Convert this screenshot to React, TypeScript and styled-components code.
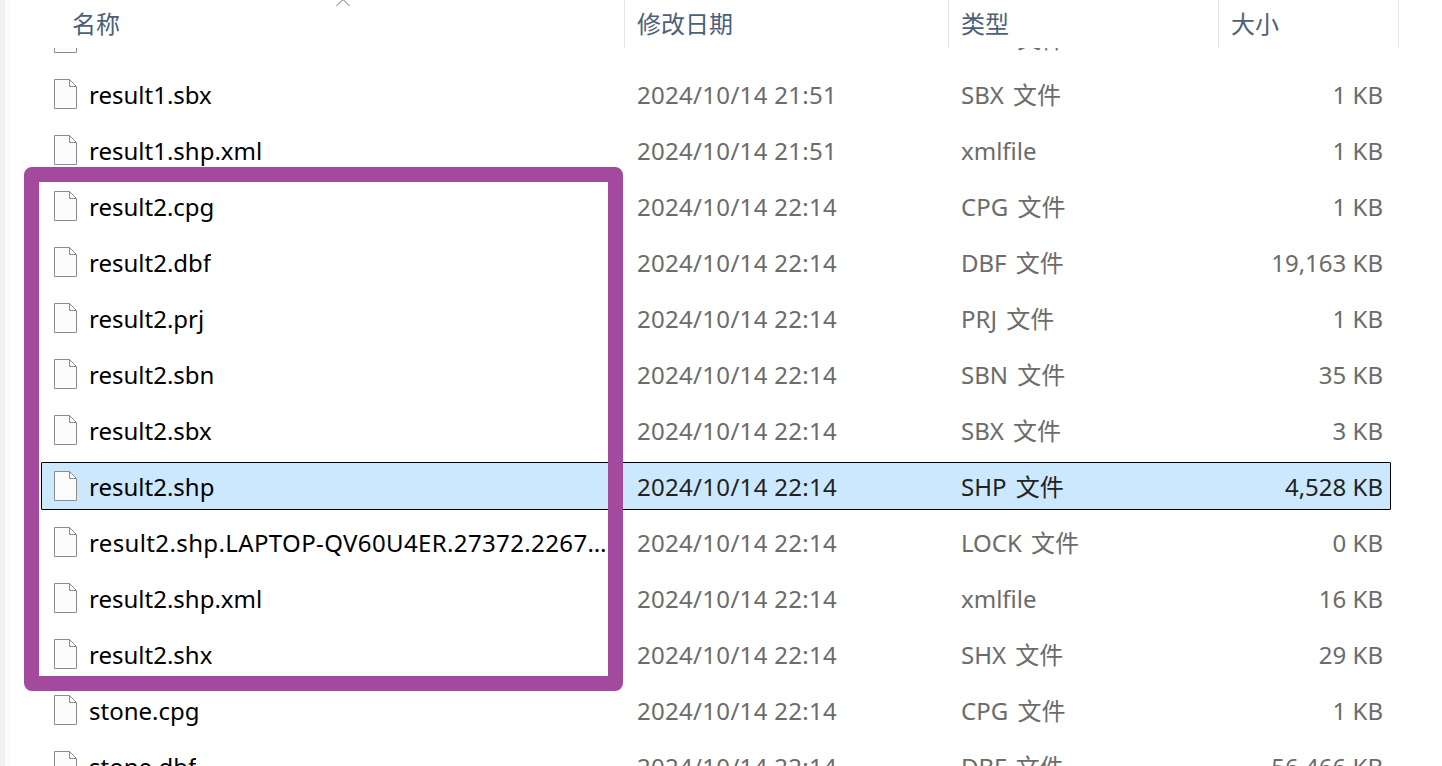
import { createGlobalStyle } from "styled-components";
import styled from "styled-components";

const GlobalStyle = createGlobalStyle`
  html, body {
    margin: 0;
    padding: 0;
    background: #fff;
  }
`;

type FileRow = {
  name: string;
  date: string;
  kind: string;
  size: string;
  selected?: boolean;
  long?: boolean;
};

const NEW_DATE = "2024/10/14 22:14";
const OLD_DATE = "2024/10/14 21:51";

const files: FileRow[] = [
  { name: "result1.sbn", date: OLD_DATE, kind: "SBN 文件", size: "1 KB" },
  { name: "result1.sbx", date: OLD_DATE, kind: "SBX 文件", size: "1 KB" },
  { name: "result1.shp.xml", date: OLD_DATE, kind: "xmlfile", size: "1 KB" },
  { name: "result2.cpg", date: NEW_DATE, kind: "CPG 文件", size: "1 KB" },
  { name: "result2.dbf", date: NEW_DATE, kind: "DBF 文件", size: "19,163 KB" },
  { name: "result2.prj", date: NEW_DATE, kind: "PRJ 文件", size: "1 KB" },
  { name: "result2.sbn", date: NEW_DATE, kind: "SBN 文件", size: "35 KB" },
  { name: "result2.sbx", date: NEW_DATE, kind: "SBX 文件", size: "3 KB" },
  { name: "result2.shp", date: NEW_DATE, kind: "SHP 文件", size: "4,528 KB", selected: true },
  { name: "result2.shp.LAPTOP-QV60U4ER.27372.22672.sr.lock", date: NEW_DATE, kind: "LOCK 文件", size: "0 KB", long: true },
  { name: "result2.shp.xml", date: NEW_DATE, kind: "xmlfile", size: "16 KB" },
  { name: "result2.shx", date: NEW_DATE, kind: "SHX 文件", size: "29 KB" },
  { name: "stone.cpg", date: NEW_DATE, kind: "CPG 文件", size: "1 KB" },
  { name: "stone.dbf", date: NEW_DATE, kind: "DBF 文件", size: "56,466 KB" },
];

const FileIcon = () => (
  <IconSvg viewBox="0 0 23 30" width="23" height="30">
    <path
      d="M0.5 0.5H15.5L22.5 7.5V29.5H0.5Z"
      fill="#fbfbfb"
      stroke="#8c8c8c"
      strokeWidth="1"
    />
    <path d="M15.5 0.5V7.5H22.5" fill="none" stroke="#8c8c8c" strokeWidth="1" />
  </IconSvg>
);

const App = () => {
  return (
    <Page>
      <GlobalStyle />
      <Gutter />
      <Explorer>
        <Header>
          <HeaderCell>名称</HeaderCell>
          <HeaderCell>修改日期</HeaderCell>
          <HeaderCell>类型</HeaderCell>
          <HeaderCell>大小</HeaderCell>
        </Header>
        <SortChevron viewBox="0 0 16 6" width="16" height="6">
          <path d="M1.5 6L8 -0.5L14.5 6" fill="none" stroke="#6b6b6b" strokeWidth="1" />
        </SortChevron>
        <List>
          {files.map((file) => (
            <Row key={file.name} $selected={file.selected}>
              <NameCell>
                <FileIcon />
                <FileName $long={file.long}>{file.name}</FileName>
              </NameCell>
              <DateCell $selected={file.selected}>{file.date}</DateCell>
              <KindCell $selected={file.selected}>{file.kind}</KindCell>
              <SizeCell $selected={file.selected}>{file.size}</SizeCell>
            </Row>
          ))}
        </List>
        <Highlight />
      </Explorer>
    </Page>
  );
};

const Page = styled.div`
  display: flex;
  width: 1442px;
  height: 766px;
  overflow: hidden;
  background: #fff;
  font-family: "Noto Sans", "Noto Sans CJK SC", sans-serif;
`;

const Gutter = styled.div`
  flex: none;
  width: 5px;
  background: #f0f0f0;
  border-right: 5px solid #fbfbfb;
`;

const Explorer = styled.div`
  position: relative;
  flex: 1;
  display: flex;
  flex-direction: column;
  min-width: 0;
`;

const Header = styled.div`
  flex: none;
  display: grid;
  grid-template-columns: 615px 324px 270px 180px;
  height: 48px;
`;

const HeaderCell = styled.div`
  display: flex;
  align-items: center;
  padding-left: 12px;
  padding-bottom: 3px;
  border-right: 1px solid #e5e5e5;
  box-sizing: border-box;
  color: #4c607a;
  font-size: 24px;

  &:first-child {
    padding-left: 62px;
  }
`;

const SortChevron = styled.svg`
  position: absolute;
  top: 0;
  left: 325px;
`;

const List = styled.div`
  flex: 1;
  min-height: 0;
  overflow: hidden;
  display: flex;
  flex-direction: column;
  gap: 8px;
  padding-left: 31px;

  & > :first-child {
    margin-top: -34px;
  }
`;

const Row = styled.div<{ $selected?: boolean }>`
  flex: none;
  display: grid;
  grid-template-columns: 583px 324px 270px 173px;
  align-items: center;
  box-sizing: border-box;
  width: 1350px;
  height: 48px;
  border: 1px solid ${(p) => (p.$selected ? "#000" : "transparent")};
  border-radius: 1px;
  background: ${(p) => (p.$selected ? "#cce8ff" : "transparent")};
`;

const NameCell = styled.div`
  display: flex;
  align-items: center;
  gap: 12px;
  min-width: 0;
  padding-left: 12px;
  padding-right: 17px;
`;

const IconSvg = styled.svg`
  flex: none;
`;

const FileName = styled.span<{ $long?: boolean }>`
  min-width: 0;
  overflow: hidden;
  white-space: nowrap;
  text-overflow: ellipsis;
  color: #000;
  font-size: 24px;
  letter-spacing: ${(p) => (p.$long ? "0.37px" : "0")};
`;

const DetailCell = styled.div<{ $selected?: boolean }>`
  padding-top: 2px;
  padding-left: 12px;
  color: ${(p) => (p.$selected ? "#222" : "#6b6b6b")};
  font-size: 24px;
  line-height: 32px;
  white-space: nowrap;
`;

const DateCell = styled(DetailCell)`
  letter-spacing: 0.3px;
`;

const KindCell = styled(DetailCell)`
  word-spacing: 3px;
`;

const SizeCell = styled(DetailCell)`
  padding-left: 0;
  padding-right: 9px;
  text-align: right;
`;

const Highlight = styled.div`
  position: absolute;
  top: 167px;
  left: 14px;
  box-sizing: border-box;
  width: 599px;
  height: 524px;
  border: 15px solid #a34a9f;
  border-radius: 8px;
  pointer-events: none;
`;

export default App;
